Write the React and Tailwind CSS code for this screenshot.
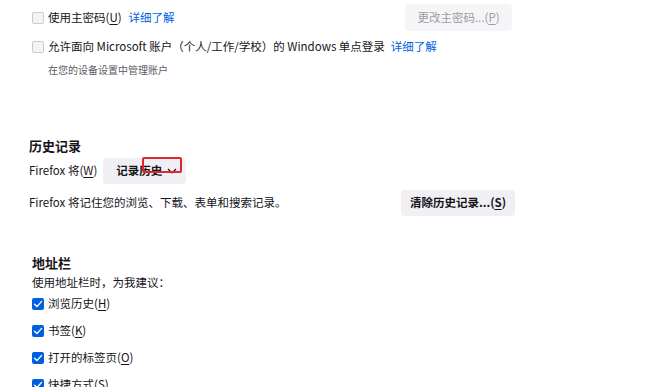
import React from "react";

const font = { fontFamily: '"Noto Sans CJK SC", "Noto Sans", sans-serif' };

function Box({ checked }) {
  if (checked) {
    return (
      <span className="flex h-[12px] w-[12px] shrink-0 items-center justify-center rounded-[2px] bg-[#0061e0]">
        <svg width="10" height="10" viewBox="0 0 10 10" fill="none">
          <path d="M1.5 5.2 L4 7.6 L8.6 2.4" stroke="white" strokeWidth="1.4" strokeLinecap="round" strokeLinejoin="round" />
        </svg>
      </span>
    );
  }
  return <span className="h-[12px] w-[12px] shrink-0 rounded-[2px] border border-[#c9c9cf] bg-[#f4f4f6]" />;
}

function U({ children }) {
  return <span className="underline underline-offset-2">{children}</span>;
}

export default function App() {
  const items = [
    ["浏览历史", "H"],
    ["书签", "K"],
    ["打开的标签页", "O"],
    ["快捷方式", "S"],
  ];

  return (
    <div className="h-[387px] w-[650px] overflow-hidden bg-white text-[11.5px] text-[#15141a]" style={font}>
      {/* 主密码 */}
      <div className="w-[512px] pl-[32px] pt-[4px]">
        <div className="flex h-[27px] items-center">
          <Box />
          <span className="ml-[4px]">使用主密码(<U>U</U>)</span>
          <span className="ml-[7px] text-[#0061e0]">详细了解</span>
          <button className="ml-auto h-[27px] w-[107px] rounded-[4px] bg-[#f5f5f7] text-[#9d9da3]">
            更改主密码...(<U>P</U>)
          </button>
        </div>
        <div className="mt-[9px] flex h-[14px] items-center">
          <Box />
          <span className="ml-[4px]">允许面向 Microsoft 账户（个人/工作/学校）的 Windows 单点登录</span>
          <span className="ml-[6px] text-[#0061e0]">详细了解</span>
        </div>
        <div className="mt-[9px] pl-[16px] text-[10px] leading-[14px] text-[#5b5b66]">在您的设备设置中管理账户</div>
      </div>

      {/* 历史记录 */}
      <div className="w-[515px] pl-[29px] pt-[60px]">
        <div className="text-[13px] font-bold leading-[18px]">历史记录</div>
        <div className="mt-[3px] flex items-center">
          <span>
            Firefox 将(<U>W</U>)
          </span>
          <div className="relative ml-[6px]">
            <button className="flex h-[26px] w-[83px] items-center justify-center gap-[5px] rounded-[4px] bg-[#f0f0f4] pl-[4px] font-semibold">
              <span>记录历史</span>
              <svg className="shrink-0" width="10" height="10" viewBox="0 0 10 10" fill="none">
                <path d="M1 3 L5 7 L9 3" stroke="#15141a" strokeWidth="1.2" />
              </svg>
            </button>
            <div className="absolute left-[39px] top-[-1px] h-[16px] w-[40px] rounded-[2px] border-2 border-[#e3262b]" />
          </div>
        </div>
        <div className="mt-[6px] flex items-center">
          <span>Firefox 将记住您的浏览、下载、表单和搜索记录。</span>
          <button className="ml-auto h-[26px] w-[114px] rounded-[4px] bg-[#f0f0f4] font-semibold">
            清除历史记录...(<U>S</U>)
          </button>
        </div>
      </div>

      {/* 地址栏 */}
      <div className="pl-[32px] pt-[38px]">
        <div className="text-[13px] font-bold leading-[18px]">地址栏</div>
        <div className="mt-[3px] leading-[14px]">使用地址栏时，为我建议：</div>
        <div className="mt-[7px] flex flex-col gap-[11px]">
          {items.map(([t, k]) => (
            <div key={k} className="flex h-[16px] items-center">
              <Box checked />
              <span className="ml-[4px]">
                {t}(<U>{k}</U>)
              </span>
            </div>
          ))}
        </div>
      </div>
    </div>
  );
}
